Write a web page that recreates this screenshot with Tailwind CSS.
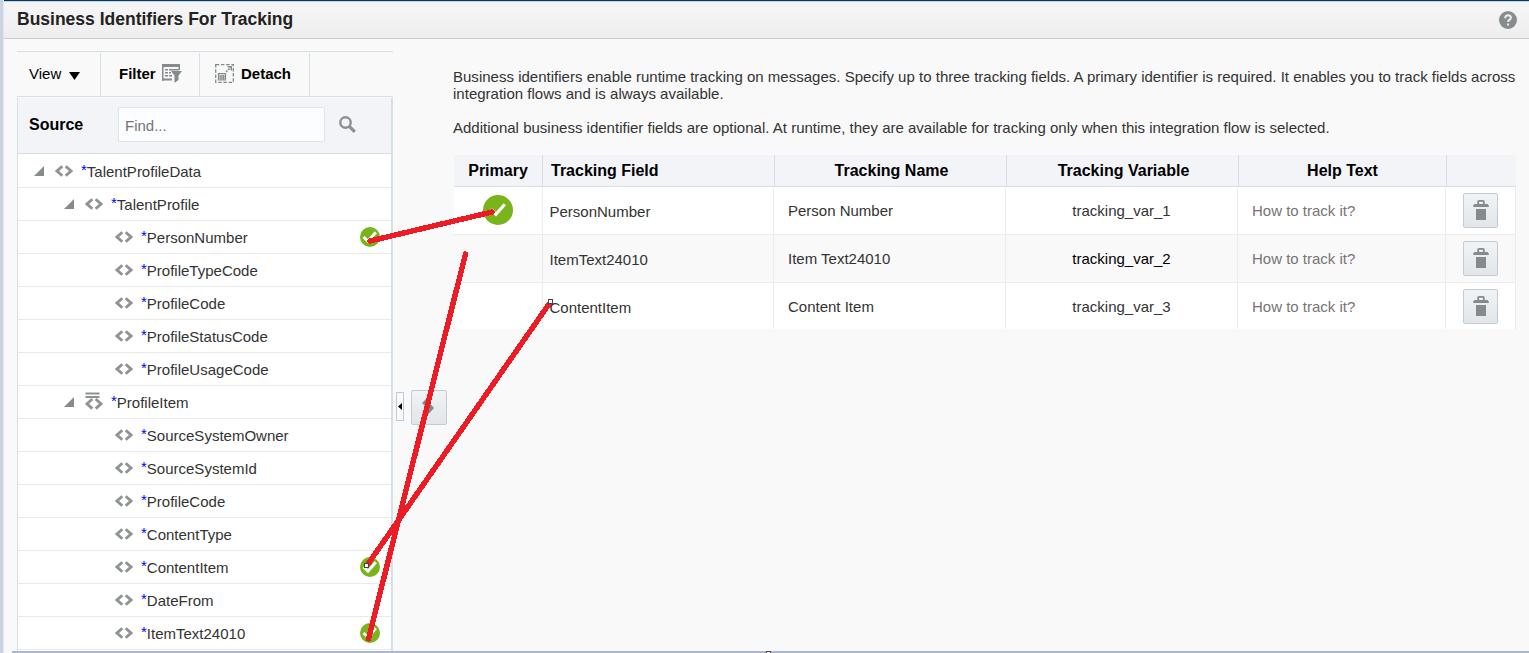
<!DOCTYPE html>
<html lang="en">
<head>
<meta charset="utf-8">
<title>Business Identifiers For Tracking</title>
<script src="https://cdn.jsdelivr.net/npm/@tailwindcss/browser@4"></script>
</head>
<body class="relative flex h-[653px] w-[1529px] overflow-hidden bg-[#f9f9f9] font-['Liberation_Sans',Arial,sans-serif] text-[15px] text-[#333]">

<svg class="hidden">
  <symbol id="element" viewBox="0 0 18 12"><path d="M7.300 1.200L2 6L7.300 10.800M10.700 1.200L16 6L10.700 10.800" fill="none" stroke="#8f9496" stroke-width="2.900"/></symbol>
  <symbol id="repeat" viewBox="0 0 18 18"><path d="M.5 1.500H14.500M.5 5H14.500" stroke="#8b9092" stroke-width="2.200"/><path d="M7.300 7L2 11.800L7.300 16.600M10.700 7L16 11.800L10.700 16.600" fill="none" stroke="#8f9496" stroke-width="2.900"/></symbol>
  <symbol id="open" viewBox="0 0 10 10"><path d="M10 0V10H0Z" fill="#858a8d"/></symbol>
  <symbol id="check" viewBox="0 0 20 20"><circle cx="10" cy="10" r="10" fill="#78b41a"/><path d="M3.500 10L8 14.200L15.800 5.200" fill="none" stroke="#fff" stroke-width="3"/></symbol>
  <symbol id="check30" viewBox="0 0 30 30"><circle cx="15" cy="15" r="15" fill="#78b41a"/><path d="M8 14.500L13 19.200L21.800 9.200" fill="none" stroke="#fff" stroke-width="3.200"/></symbol>
  <symbol id="trash" viewBox="0 0 16 20"><path d="M5.200 4V1.500Q5.200 .9 6 .9H10Q10.800 .9 10.800 1.500V4" fill="none" stroke="#858a8d" stroke-width="1.800"/><path d="M1.500 4H14.500L15.800 5.500V7H.2V5.500ZM3 9H13V20H3Z" fill="#858a8d"/></symbol>
</svg>

<div class="w-1 shrink-0 border-r border-[#e3e8ef] bg-[#c9d3e3]"></div>
<main class="flex min-w-0 flex-1 flex-col">
  <header class="flex h-[39px] shrink-0 items-center justify-between border-t border-b border-t-[#003b67] border-b-[#c3cdd9] bg-linear-to-b from-[#f6f6f6] to-[#eeeeee] pr-3 pl-[13px] shadow-[inset_0_1px_0_#c5d2de]">
    <h1 class="pb-0.5 text-[17.5px] leading-5 font-bold text-[#222]">Business Identifiers For Tracking</h1>
    <svg class="size-[18px]" viewBox="0 0 18 18"><circle cx="9" cy="9" r="9" fill="#878c8f"/><path d="M6.200 7.200Q6.200 4.200 9.100 4.200Q11.900 4.200 11.900 6.800Q11.900 8.200 10.200 9Q9.100 9.600 9.100 11M9.100 12.400V14.600" fill="none" stroke="#eee" stroke-width="2"/></svg>
  </header>

  <div class="flex min-h-0 flex-1">
    <section class="ml-[13px] flex w-[376px] shrink-0 flex-col pt-3">
      <div class="flex h-[46px] shrink-0 border-t border-b border-[#d6dfe6] pt-px text-black">
        <div class="flex w-[84px] items-center border-r border-[#d6dfe6] pl-3">View<svg class="mt-0.5 ml-2 h-[8px] w-[11px]" viewBox="0 0 11 8"><path d="M0 0H11L5.500 8Z"/></svg></div>
        <div class="flex w-[99px] items-center border-r border-[#d6dfe6] pl-[18px] font-bold">Filter
          <svg class="mb-0.5 ml-[6px] h-[19px] w-5" viewBox="0 0 20 19"><path d="M0 0H18V3H0ZM0 3H1.500V17H0ZM0 14.500H10V16.500H0ZM3 5H6V6.500H3ZM7 5H16.500V6.500H7ZM16.500 3H18V6H16.500ZM3 8H6V9.500H3ZM3 11H6V12.500H3ZM7 11H10V12.500H7ZM7 8H9V9.500H7ZM9 7H20L16.500 11.500V16L12.500 19V11.500Z" fill="#858a8d"/></svg></div>
        <div class="flex w-[110px] items-center border-r border-[#d6dfe6] pl-[15px] font-bold">
          <svg class="mr-[7px] mb-0.5 size-[19px]" viewBox="0 0 19 19" fill="none" stroke="#858a8d"><path d="M.7 .7H18.300V18.300H.7Z" stroke-width="1.300" stroke-dasharray="3.500 1.700"/><path d="M3 9.700H11M3 12H11M3 14H11M3 16H11M3.500 9V16.500M6 11V16M8.300 11V16M10.500 9V16.500" stroke-width="1.200"/><path d="M11 8L15.500 3.500" stroke-dasharray="2 1" stroke-width="1.500"/><path d="M12.500 2.700H16.300V6.500" stroke-width="1.500"/></svg>Detach</div>
      </div>
      <div class="mt-px flex h-[56px] w-[376px] shrink-0 items-center border-r-2 border-b border-l border-[#d6dfe6] bg-[#f2f4f8] pb-0.5 pl-[11px]">
        <span class="w-[89px] text-base font-bold text-black">Source</span>
        <div class="flex h-[35px] w-[207px] items-center rounded-[2px] border border-[#dfe4e7] bg-[#fcfdfe] pt-1 pl-1.5 text-[#757575]">Find...</div>
        <svg class="ml-[14px] size-[17px]" viewBox="0 0 17 17" fill="none" stroke="#8b9092"><circle cx="6.500" cy="6.500" r="5.200" stroke-width="2.400"/><path d="M10.300 10.300L15.800 15.800" stroke-width="3.200"/></svg>
      </div>
      <div id="tree" class="flex min-h-0 flex-1 flex-col overflow-hidden border-r-2 border-l border-[#d6dfe6] bg-white pt-px"></div>
    </section>

    <div class="mt-[351px] flex w-[57px] shrink-0 items-start pl-[3px]">
      <div class="mt-[2px] flex h-[29px] w-2 items-center justify-center border border-[#c0cad5] bg-[#fafafa]"><svg class="h-[7px] w-1" viewBox="0 0 4 7"><path d="M4 0V7L0 3.500Z"/></svg></div>
      <div class="ml-[7px] flex h-[35px] w-9 items-center justify-center rounded-[2px] border border-[#c0cdd9] bg-linear-to-b from-[#f1f3f5] to-[#e2e6e9]"><svg class="mr-0.5 h-[18px] w-3" viewBox="0 0 12 18"><path d="M4 0L12 9L4 18L0 14L5 9L0 4Z" fill="#858a8d"/></svg></div>
    </div>

    <section class="pt-[29px]">
      <p class="w-[1070px] pl-[3px] leading-[17px] tracking-[0.011px] whitespace-nowrap">Business identifiers enable runtime tracking on messages. Specify up to three tracking fields. A primary identifier is required. It enables you to track fields across<br>integration flows and is always available.</p>
      <p class="mt-[17px] w-[1070px] pl-[3px] leading-[17px] tracking-[0.008px] whitespace-nowrap">Additional business identifier fields are optional. At runtime, they are available for tracking only when this integration flow is selected.</p>
      <div class="mt-[19px] ml-1 w-[1062px]">
        <div class="grid h-8 grid-cols-[89px_232px_232px_232px_208px_69px] border-b border-[#d6dfe6] bg-[#f2f4f8] text-center text-base leading-[31px] font-bold text-black">
          <div class="border-r border-[#d6dfe6]">Primary</div>
          <div class="border-r border-[#d6dfe6] pl-2 text-left">Tracking Field</div>
          <div class="border-r border-[#d6dfe6] pl-0.5">Tracking Name</div>
          <div class="border-r border-[#d6dfe6] pl-0.5">Tracking Variable</div>
          <div class="border-r border-[#d6dfe6]">Help Text</div>
          <div></div>
        </div>
        <div id="rows"></div>
      </div>
    </section>
  </div>
</main>

<div class="absolute right-0 bottom-0 left-3 h-0.5 bg-[#abb7cb]"></div>
<svg class="absolute inset-0" width="1529" height="653" viewBox="0 0 1529 653" shape-rendering="crispEdges">
  <g stroke="#ed1c24" stroke-width="5.400" stroke-linecap="round"><path d="M370 241L492 212M465.500 254L368.500 639M549 304L368 564"/></g>
  <g fill="#fff" stroke="#444" stroke-width="1"><path d="M364.500 563.500H368.500V567.500H364.500ZM548.500 299.500H552.500V303.500H548.500ZM766.500 651.500H770.500V655.500H766.500Z"/></g>
</svg>

<script>
const icon = (id, cls) => `<svg class="${cls}"><use href="#${id}"/></svg>`;
const tree = [
  [0, 'TalentProfileData'], [1, 'TalentProfile'], [2, 'PersonNumber', 1], [2, 'ProfileTypeCode'], [2, 'ProfileCode'],
  [2, 'ProfileStatusCode'], [2, 'ProfileUsageCode'], [1, 'ProfileItem'], [2, 'SourceSystemOwner'], [2, 'SourceSystemId'],
  [2, 'ProfileCode'], [2, 'ContentType'], [2, 'ContentItem', 1], [2, 'DateFrom'], [2, 'ItemText24010', 1]
];
const indent = ['pl-4', 'pl-[46px]', 'pl-[76px]'];
document.getElementById('tree').innerHTML = tree.map(([d, name, on]) => `
  <div class="flex h-[33px] shrink-0 items-center border-b border-[#e8ebee] pr-[11px] pt-px ${indent[d]}">
    <span class="w-[21px]">${d < 2 ? icon('open', 'mb-px size-[10px]') : ''}</span>
    ${name === 'ProfileItem' ? icon('repeat', 'mb-1 h-[18px] w-[18px]') : icon('element', 'mb-px h-3 w-[18px]')}
    <span class="ml-2 pb-[3px] text-[#0000ff]">*</span><span class="flex-1 pt-px">${name}</span>
    ${on ? icon('check', 'mb-0.5 size-5') : ''}
  </div>`).join('');
const rows = [['PersonNumber', 'Person Number', 1], ['ItemText24010', 'Item Text24010', 2], ['ContentItem', 'Content Item', 3]];
document.getElementById('rows').innerHTML = rows.map(([f, n, i]) => `
  <div class="grid grid-cols-[89px_231px_232px_232px_208px_70px] overflow-hidden border-[#ececec] leading-[48px] ${i === 2 ? 'bg-[#f9f9f9]' : 'bg-white'} ${i === 3 ? 'h-[46px]' : 'h-12 border-b'}">
    <div class="border-r border-[#ececec] pt-2 pl-[29px]">${i === 1 ? icon('check30', 'size-[30px]') : ''}</div>
    <div class="border-r border-[#ececec] pt-px pl-[6.500px]">${f}</div>
    <div class="border-r border-[#ececec] pl-[14px]">${n}</div>
    <div class="border-r border-[#ececec] text-center ${i === 2 ? 'text-black' : ''}">tracking_var_${i}</div>
    <div class="border-r border-[#ececec] pl-[14px] text-[#757575]">How to track it?</div>
    <div class="border-r border-[#ececec] pt-1.5 pl-[17px]"><div class="flex size-[35px] items-center justify-center rounded-[2px] border border-[#c0cdd9] bg-linear-to-b from-[#f1f3f5] to-[#e2e6e9] pb-px">${icon('trash', 'h-5 w-4')}</div></div>
  </div>`).join('');
</script>
</body>
</html>
